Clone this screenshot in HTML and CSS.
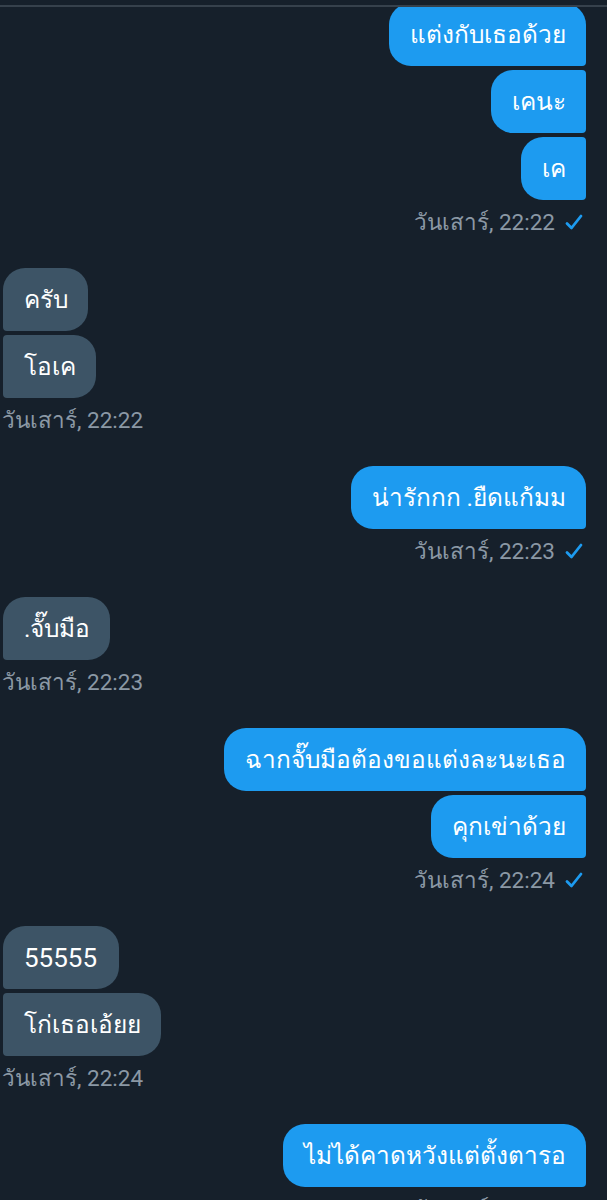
FILE: index.html
```html
<!DOCTYPE html>
<html lang="th">
<head>
<meta charset="utf-8">
<link rel="stylesheet" href="styles.css">
</head>
<body>
<div class="topline"></div>
<div class="thread">
  <div class="group sent">
    <div class="bubble first">แต่งกับเธอด้วย</div>
    <div class="bubble mid">เคนะ</div>
    <div class="bubble last">เค</div>
    <div class="meta">วันเสาร์, 22:22 <svg class="check" viewBox="0 0 18 16"><path d="M2 9.5 L6.5 14 L16 2" fill="none" stroke="#1d9bf0" stroke-width="2.8" stroke-linecap="round" stroke-linejoin="round"/></svg></div>
  </div>
  <div class="group recv">
    <div class="bubble first">ครับ</div>
    <div class="bubble last">โอเค</div>
    <div class="meta">วันเสาร์, 22:22</div>
  </div>
  <div class="group sent">
    <div class="bubble single">น่ารักกก .ยืดแก้มม</div>
    <div class="meta">วันเสาร์, 22:23 <svg class="check" viewBox="0 0 18 16"><path d="M2 9.5 L6.5 14 L16 2" fill="none" stroke="#1d9bf0" stroke-width="2.8" stroke-linecap="round" stroke-linejoin="round"/></svg></div>
  </div>
  <div class="group recv">
    <div class="bubble single">.จั๊บมือ</div>
    <div class="meta">วันเสาร์, 22:23</div>
  </div>
  <div class="group sent">
    <div class="bubble first">ฉากจั๊บมือต้องขอแต่งละนะเธอ</div>
    <div class="bubble last">คุกเข่าด้วย</div>
    <div class="meta">วันเสาร์, 22:24 <svg class="check" viewBox="0 0 18 16"><path d="M2 9.5 L6.5 14 L16 2" fill="none" stroke="#1d9bf0" stroke-width="2.8" stroke-linecap="round" stroke-linejoin="round"/></svg></div>
  </div>
  <div class="group recv">
    <div class="bubble first digits">55555</div>
    <div class="bubble last">โก่เธอเอ้ยย</div>
    <div class="meta">วันเสาร์, 22:24</div>
  </div>
  <div class="group sent">
    <div class="bubble single">ไม่ได้คาดหวังแต่ตั้งตารอ</div>
    <div class="meta">วันเสาร์, 22:25 <svg class="check" viewBox="0 0 18 16"><path d="M2 9.5 L6.5 14 L16 2" fill="none" stroke="#1d9bf0" stroke-width="2.8" stroke-linecap="round" stroke-linejoin="round"/></svg></div>
  </div>
</div>
</body>
</html>
```
FILE: styles.css
```css
html, body {
  margin: 0;
  padding: 0;
  background: #16202b;
}
body {
  font-family: Roboto, "Noto Sans", "DejaVu Sans", sans-serif;
  color: #ffffff;
  overflow: hidden;
  height: 1200px;
  position: relative;
}
.topline {
  position: absolute;
  top: 0;
  left: 0;
  right: 0;
  height: 5px;
  background: #16202b;
  border-bottom: 2px solid #36414c;
  z-index: 2;
}
.thread {
  display: flex;
  flex-direction: column;
  padding: 3px 21px 0 3px;
}
.group {
  display: flex;
  flex-direction: column;
  gap: 4px;
  margin-bottom: 32px;
}
.group.sent { align-items: flex-end; }
.group.recv { align-items: flex-start; }
.bubble {
  height: 63px;
  box-sizing: border-box;
  padding: 0 20px 0 21px;
  display: flex;
  align-items: center;
  font-size: 24.4px;
  white-space: nowrap;
}
.bubble.digits {
  font-size: 26px;
  padding-right: 22px;
}
.sent .bubble {
  background: #1d9bf0;
  border-radius: 22px 4px 4px 22px;
}
.sent .bubble.first { border-radius: 22px 22px 4px 22px; }
.sent .bubble.single { border-radius: 22px 22px 4px 22px; }
.recv .bubble {
  background: #3d5466;
  border-radius: 4px 22px 22px 4px;
}
.recv .bubble.first { border-radius: 22px 22px 22px 4px; }
.recv .bubble.single { border-radius: 22px 22px 22px 4px; }
.meta {
  margin-top: 4px;
  height: 28px;
  line-height: 28px;
  font-size: 22.5px;
  color: #8b98a5;
  display: flex;
  align-items: center;
  gap: 10px;
  white-space: nowrap;
}
.sent .meta { margin-right: 3px; }
.recv .meta { margin-left: -1px; }
.check {
  width: 18px;
  height: 16px;
}
```
